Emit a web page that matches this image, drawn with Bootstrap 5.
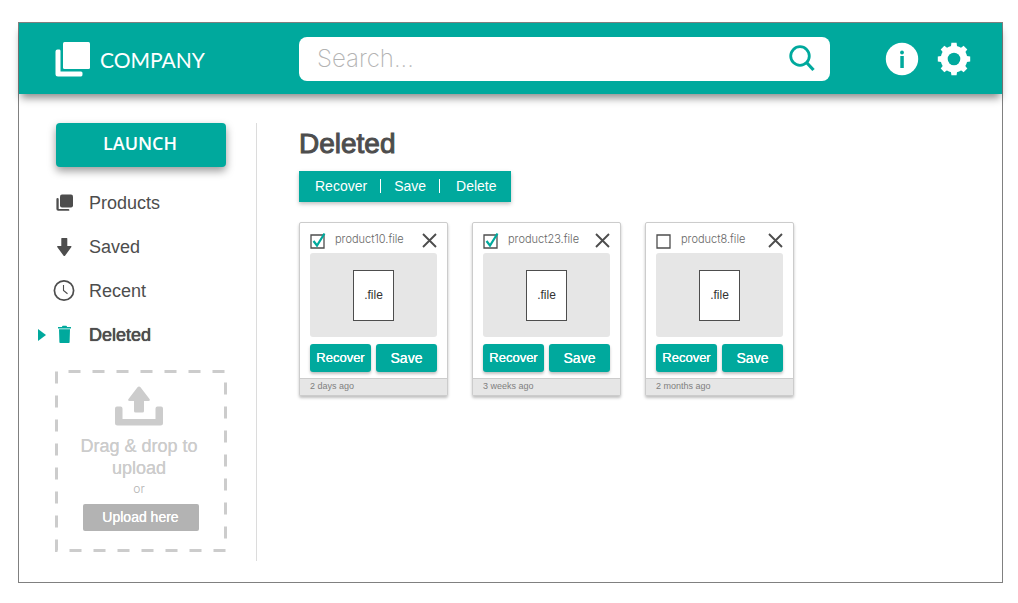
<!DOCTYPE html>
<html lang="en">
<head>
<meta charset="utf-8">
<meta name="viewport" content="width=device-width, initial-scale=1">
<title>Company – Deleted files</title>
<link href="https://cdn.jsdelivr.net/npm/bootstrap@5.3.0/dist/css/bootstrap.min.css" rel="stylesheet">
<style>
:root{--teal:#00a99d;--ink:#4d4d4d;--pale:#ccc}
body{font-family:"Liberation Sans",Arial,sans-serif;color:var(--ink);background:#fff}
.app-frame{margin:22px 15px 20px 18px;min-height:calc(100vh - 42px);border:1px solid #808080}
.app-header{background:var(--teal);min-height:71px;padding-right:31px;box-shadow:0 6px 8px -2px rgba(0,0,0,.45)}
.side-width{width:280px;flex:none}
.brand-link{padding-left:36px;gap:9px;font:400 21px/1 Lato,sans-serif;color:#fff}
.brand-link span{padding-top:2px}
.search-box{background:#fff;border-radius:8px;height:44px;padding:0 14px 0 18px;margin-right:55px}
.search-box input{border:0;outline:0;background:none;font:200 24px/1 Inter,"Liberation Sans",sans-serif;padding:0}
.search-box input::placeholder{color:#b3b3b3;opacity:1}
.bare-btn{border:0;background:none;padding:0;display:block;color:inherit}
.bare-btn svg,.side-link svg,.brand-link svg{display:block}
.head-icons{gap:18px}
.side{width:238px;padding:0 31px 0 36px;border-right:1px solid #dcdcdc}
.app-body{padding:29px 32px 21px 0}
.launch-btn{background:var(--teal);color:#fff;border:0;border-radius:4px;height:44px;width:170px;padding:0 2px 4px 0;margin-left:1px;font:600 18px/40px "Open Sans","Noto Sans",sans-serif;box-shadow:0 4px 8px rgba(0,0,0,.4)}
.side-menu{margin:14px 0 13px}
.side-link{height:44px;gap:14px;font-size:18px;color:var(--ink);position:relative}
.side-link svg{width:22px;height:22px;margin-left:-2px}
.side-link.current{text-shadow:0 0 0 var(--ink),0 0 1px var(--ink)}
.side-link.current::before{content:"";position:absolute;left:-17px;border:6px solid transparent;border-left:8px solid var(--teal);border-right:0}
.drop-zone{position:relative;width:172px;height:182px;padding:16px 4px 0 0;color:var(--pale);font-size:18px;line-height:22px;text-shadow:0 0 0 var(--pale)}
.drop-outline{position:absolute;inset:0;pointer-events:none}
.drop-text{margin-top:9px}
.drop-zone .or-line{font:300 12px/20px Inter,sans-serif;text-shadow:none;color:#b3b3b3}
.upload-btn{border:0;border-radius:2px;background:#b3b3b3;color:#fff;width:116px;height:27px;font-size:14px;line-height:27px;padding:0;margin:5px 0 0 3px;text-shadow:0 0 0 #fff}
.page-main{padding-left:42px}
.page-title{font-size:28px;line-height:32px;margin:5px 0 11px;font-weight:400;-webkit-text-stroke:1px var(--ink)}
.tool-strip{background:var(--teal);height:31px;box-shadow:0 2px 4px rgba(0,0,0,.25);padding:0 14px 1px 16px;color:#fff;font-size:14px;line-height:14px}
.tool-strip button+button{border-left:1px solid #fff;margin-left:13px;padding-left:13px}
.tool-strip button:last-child{padding-left:16px}
.file-grid{gap:24px;margin-top:20px}
.file-card{width:149px;border:1px solid #ccc;border-radius:2px;box-shadow:0 2px 3px rgba(0,0,0,.25);background:#fff}
.file-inner{padding:8px 10px 6px}
.file-head{height:18px;margin-bottom:4px}
.file-head label{font:300 11px/16px Inter,sans-serif;margin:0 0 2px 8px;color:#666;white-space:nowrap}
.tick{appearance:none;width:17px;height:17px;margin:0;flex:none;background:url("data:image/svg+xml,%3Csvg xmlns='http://www.w3.org/2000/svg' viewBox='0 0 17 17'%3E%3Cpath d='M1 3h13v13H1z' fill='white' stroke='%234d4d4d' stroke-width='1.3'/%3E%3C/svg%3E")}
.tick:checked{background-image:url("data:image/svg+xml,%3Csvg xmlns='http://www.w3.org/2000/svg' viewBox='0 0 17 17'%3E%3Cpath d='M1 3h13v13H1z' fill='white' stroke='%234d4d4d' stroke-width='1.3'/%3E%3Cpath d='M3.5 9l3.500 4.500L14.500 1.500' fill='none' stroke='%2300a99d' stroke-width='2.2'/%3E%3C/svg%3E")}
.thumb{background:#e6e6e6;border-radius:3px;height:84px}
.thumb span{width:41px;height:51px;border:1px solid var(--ink);background:#fff;font-size:12px;line-height:49px;text-align:center;color:#333}
.file-acts{gap:5px;margin-top:7px}
.file-acts button{border:0;border-radius:3px;background:var(--teal);color:#fff;height:28px;flex:1 1 0;padding:0;font-size:13px;text-shadow:0 0 0 #fff;box-shadow:0 2px 3px rgba(0,0,0,.25)}
.file-acts button+button{font-size:14px}
.file-foot{background:#e6e6e6;border-top:1px solid #ccc;height:17px;font-size:9px;line-height:15px;padding-left:10px;color:#808080}
</style>
</head>
<body>
<div class="app-frame d-flex flex-column">
  <header class="app-header d-flex align-items-center">
    <a href="#" class="brand-link side-width d-flex align-items-center text-decoration-none">
      <svg width="36" height="36" viewBox="0 0 36 36" fill="#fff" aria-hidden="true"><rect x="8" y="1" width="27" height="27" rx="1.5"/><path d="M2.5 8.5H4.500Q5.500 8.500 5.500 10V30.500H26Q27.500 30.500 27.500 32V33.500Q27.500 35.500 26 35.500H3Q.5 35.500 .5 33V10.500Q.5 8.500 2.500 8.500Z"/></svg>
      <span>COMPANY</span>
    </a>
    <form class="search-box d-flex align-items-center flex-grow-1" role="search" onsubmit="return false">
      <input class="flex-grow-1" type="search" placeholder="Search..." aria-label="Search">
      <button class="bare-btn" type="submit" aria-label="Search"><svg width="28" height="28" viewBox="0 0 28 28" fill="none" stroke="#00a99d"><circle cx="12" cy="11" r="9.300" stroke-width="2.800"/><path d="M18.500 17.500l7 7.500" stroke-width="3.200"/></svg></button>
    </form>
    <div class="head-icons d-flex align-items-center">
      <button class="bare-btn" aria-label="Information"><svg width="34" height="34" viewBox="0 0 34 34"><circle cx="17" cy="17" r="16.200" fill="#fff"/><circle cx="17" cy="10.500" r="1.900" fill="#00a99d"/><path d="M15.300 14h3.500v12h-3.500z" fill="#00a99d"/></svg></button>
      <button class="bare-btn" aria-label="Settings"><svg width="34" height="34" viewBox="-17 -17 34 34" fill="#fff"><path id="tooth" d="M-3.300-11l.7-5.200h5.200l.7 5.200v22l-.7 5.200h-5.200l-.7-5.200z"/><use href="#tooth" transform="rotate(45)"/><use href="#tooth" transform="rotate(90)"/><use href="#tooth" transform="rotate(135)"/><circle r="13.300"/><circle r="6.300" fill="#00a99d"/></svg></button>
    </div>
  </header>

  <div class="app-body d-flex flex-grow-1">
    <aside class="side flex-shrink-0">
      <button class="launch-btn">LAUNCH</button>
      <nav class="side-menu d-flex flex-column">
        <a href="#" class="side-link d-flex align-items-center text-decoration-none">
          <svg viewBox="0 0 22 22" fill="#4d4d4d"><rect x="7" y="2.500" width="13" height="13" rx="2"/><path d="M4.500 6q1.200 0 1.200 1.200V17h9.500q1.200 0 1.200 1.200q0 .5-1.200.5H5.200q-1.800 0-1.800-1.800V7.200q0-1.200 1.100-1.200z"/></svg><span>Products</span></a>
        <a href="#" class="side-link d-flex align-items-center text-decoration-none">
          <svg viewBox="0 0 22 22" fill="#4d4d4d"><path d="M8.300 2.500q0-.5.500-.5h5q.5 0 .5.500V10h3.600q1 0 .5 1l-6.200 8.500q-.9 1-1.800 0L4.200 11q-.5-1 .5-1h3.600z"/></svg><span>Saved</span></a>
        <a href="#" class="side-link d-flex align-items-center text-decoration-none">
          <svg viewBox="0 0 22 22" fill="none" stroke="#4d4d4d"><circle cx="11" cy="10.500" r="9.600" stroke-width="1.700"/><path d="M10.500 5v5.500l4 3.200" stroke-width="1.100"/></svg><span>Recent</span></a>
        <a href="#" class="side-link current d-flex align-items-center text-decoration-none" aria-current="page">
          <svg viewBox="0 0 22 22" fill="#00a99d"><path d="M5 3h4q0-1.200 1-1.200h3q1 0 1 1.200h4v1.600H5zM6 5.300h11l-.4 13q0 .8-.8.800H7.200q-.8 0-.8-.8z"/></svg><span>Deleted</span></a>
      </nav>
      <section class="drop-zone d-flex flex-column align-items-center text-center">
        <svg class="drop-outline" width="172" height="182" viewBox="0 0 172 182" aria-hidden="true"><rect x="1.500" y="1.500" width="169" height="179" fill="none" stroke="#ccc" stroke-width="3" stroke-dasharray="12 12" stroke-dashoffset="12"/></svg>
        <svg width="48" height="40" viewBox="0 0 48 40" fill="#ccc" aria-hidden="true"><path d="M22.500 1.300q1.500-1.800 3 0L34.500 13q1 2-1 2H29v10q0 1.500-1.500 1.500h-7Q19 26.500 19 25V15h-4.500q-2 0-1-2z"/><path d="M2 20.500h3.500q2 0 2 2V33h33V22.500q0-2 2-2H46q2 0 2 2V37q0 2.500-2.500 2.500h-43Q0 39.500 0 37V22.500q0-2 2-2z"/></svg>
        <div class="drop-text">Drag &amp; drop to<br>upload</div>
        <div class="or-line">or</div>
        <button class="upload-btn">Upload here</button>
      </section>
    </aside>

    <main class="page-main flex-grow-1">
      <h1 class="page-title">Deleted</h1>
      <div class="tool-strip d-inline-flex align-items-center" role="toolbar" aria-label="Selected files">
        <button class="bare-btn">Recover</button><button class="bare-btn">Save</button><button class="bare-btn">Delete</button>
      </div>
      <div class="file-grid d-flex flex-wrap">
        <article class="file-card">
          <div class="file-inner">
            <div class="file-head d-flex align-items-center"><input class="tick" type="checkbox" id="f10" checked><label for="f10">product10.file</label>
              <button class="bare-btn ms-auto" aria-label="Remove"><svg width="16" height="16" viewBox="0 0 16 16" stroke="#4d4d4d" stroke-width="1.900"><path d="M2 2l13 13M15 2L2 15"/></svg></button></div>
            <div class="thumb d-flex align-items-center justify-content-center"><span>.file</span></div>
            <div class="file-acts d-flex"><button>Recover</button><button>Save</button></div>
          </div>
          <div class="file-foot">2 days ago</div>
        </article>
        <article class="file-card">
          <div class="file-inner">
            <div class="file-head d-flex align-items-center"><input class="tick" type="checkbox" id="f23" checked><label for="f23">product23.file</label>
              <button class="bare-btn ms-auto" aria-label="Remove"><svg width="16" height="16" viewBox="0 0 16 16" stroke="#4d4d4d" stroke-width="1.900"><path d="M2 2l13 13M15 2L2 15"/></svg></button></div>
            <div class="thumb d-flex align-items-center justify-content-center"><span>.file</span></div>
            <div class="file-acts d-flex"><button>Recover</button><button>Save</button></div>
          </div>
          <div class="file-foot">3 weeks ago</div>
        </article>
        <article class="file-card">
          <div class="file-inner">
            <div class="file-head d-flex align-items-center"><input class="tick" type="checkbox" id="f8"><label for="f8">product8.file</label>
              <button class="bare-btn ms-auto" aria-label="Remove"><svg width="16" height="16" viewBox="0 0 16 16" stroke="#4d4d4d" stroke-width="1.900"><path d="M2 2l13 13M15 2L2 15"/></svg></button></div>
            <div class="thumb d-flex align-items-center justify-content-center"><span>.file</span></div>
            <div class="file-acts d-flex"><button>Recover</button><button>Save</button></div>
          </div>
          <div class="file-foot">2 months ago</div>
        </article>
      </div>
    </main>
  </div>
</div>
<script src="https://cdn.jsdelivr.net/npm/bootstrap@5.3.0/dist/js/bootstrap.bundle.min.js"></script>
</body>
</html>
